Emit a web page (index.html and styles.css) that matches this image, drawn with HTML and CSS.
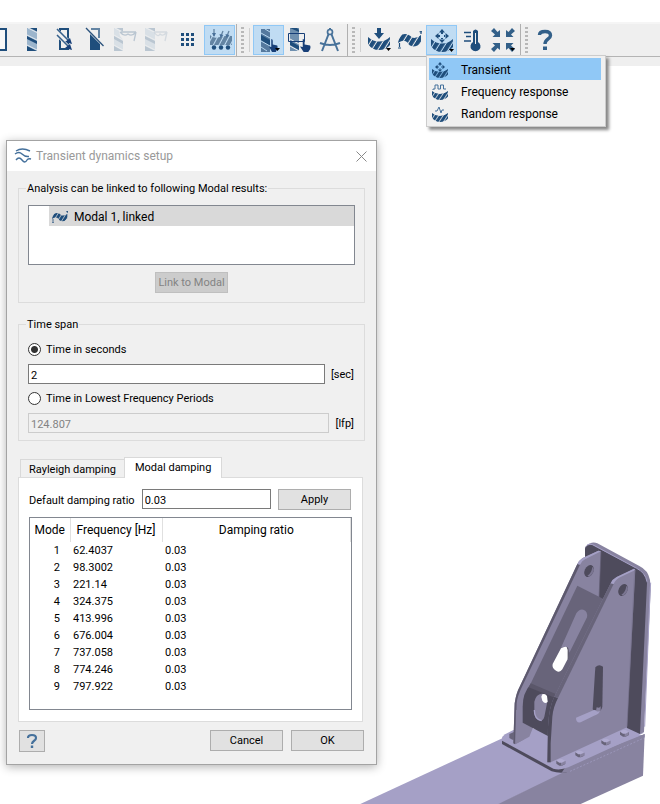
FILE: index.html
```html
<!DOCTYPE html>
<html lang="en">
<head>
<meta charset="utf-8">
<title>Transient dynamics setup</title>
<link rel="stylesheet" href="styles.css">
</head>
<body>
<svg class="defs" aria-hidden="true">
  <defs>
    <pattern id="hatch" width="5.200" height="5" patternUnits="userSpaceOnUse" patternTransform="rotate(32)">
      <rect width="4.200" height="5" fill="#1f4e7c"/>
    </pattern>
    <pattern id="hatch-soft" width="5" height="5" patternUnits="userSpaceOnUse" patternTransform="rotate(28)">
      <rect width="4" height="5" fill="#6384a3"/>
    </pattern>
    <symbol id="bowl" viewBox="0 0 22 13" preserveAspectRatio="none">
      <path d="M0 0Q5 4.500 11 4.500T22 0V8Q18 13 11 13T0 7Z" fill="url(#hatch)"/>
    </symbol>
    <symbol id="bar" viewBox="0 0 10 23" preserveAspectRatio="none">
      <path d="M0 0H10V23H0Z" fill="#9cb5cc"/>
      <path d="M3 0H10V3.500ZM0 8L10 13V16L0 11ZM0 18L10 23H0Z" fill="#1f4e7c"/>
      <path d="M1 0L10 4.500M0 7L10 12M0 17L10 22" stroke="#e4eaf0" stroke-width="1"/>
    </symbol>
    <symbol id="moves" viewBox="0 0 14 14">
      <path d="M7 0L10 3.500H4ZM7 14L10 10.500H4ZM0 7L3.500 4V10ZM14 7L10.500 4V10ZM6 3h2v2H6ZM6 9h2v2H6ZM3 6h2v2H3ZM9 6h2v2H9Z" fill="#1f4e7c"/>
    </symbol>
    <symbol id="wave" viewBox="0 0 24 18">
      <path d="M0 12Q1 3 7 3Q11 3 14 6.500Q18 8 23 4V11Q20 15.500 15 15.500Q11 15 9.500 11.500Q6 8 0 12Z" fill="url(#hatch)"/>
      <path d="M1.500 12V16M0 17h3M23 0v3M21.500 .750h3" stroke="#1f4e7c" stroke-width="1.200" fill="none"/>
    </symbol>
    <symbol id="hand" viewBox="0 0 12 14" preserveAspectRatio="none">
      <path d="M3 0Q5 0 5 2V6L11 7Q12 8 11 11L9 14H4L0 8L3 8.500Z" fill="#173f78"/>
    </symbol>
  </defs>
</svg>

<header class="toolbar">
  <div class="group group-first">
    <button class="tool" aria-label="Outline"><svg viewBox="-13 25 31 30"><path d="M-4 29H6V50H-4Z" fill="#f8f8f8" stroke="#1f4e7c" stroke-width="2"/></svg></button>
    <button class="tool" aria-label="Mesh"><svg viewBox="18 25 31 30"><use href="#bar" x="27" y="28" width="10" height="23"/></svg></button>
    <button class="tool" aria-label="Contour"><svg viewBox="49 25 31 30"><path d="M60 32V29H68V49H60V39" fill="none" stroke="#1f4e7c" stroke-width="2"/><path d="M57 30L70 42M57 35L70 48" stroke="#efefef" stroke-width="3"/><path d="M57 29L70 42M57 35L70 48" stroke="#35608c" stroke-width="1.500"/><path d="M72 44L65 42L70 38ZM72 50L65 48L70 44Z" fill="#173f78"/></svg></button>
    <button class="tool" aria-label="Section"><svg viewBox="80 25 31 30"><path d="M90 34L100 44V50H90Z" fill="#1f4e7c"/><path d="M91 29H99V38" fill="none" stroke="#6384a3" stroke-width="2"/><path d="M86 28L103.500 46" stroke="#2a527c" stroke-width="1.300"/></svg></button>
    <button class="tool faded" aria-label="Show mask" disabled><svg viewBox="111 25 31 30"><use href="#bar" x="114" y="28" width="9" height="23"/><path d="M119 31Q125 35 128 33Q131 35 136 31V41H124L120 36Z" fill="#efefef"/><path d="M120 32Q124 37 128 34Q132 37 136 32L134 41M121 32H136" stroke="#1f4e7c" stroke-width="1.300" fill="none"/></svg></button>
    <button class="tool faded" aria-label="Hide mask" disabled><svg viewBox="142 25 31 30"><use href="#bar" x="145" y="28" width="10" height="23"/><g opacity=".5"><path d="M154 32Q158 38 160 34Q163 37 167 32L165 41M155 32H167" stroke="#1f4e7c" stroke-width="1.300" fill="none"/></g></svg></button>
    <button class="tool" aria-label="Grid"><svg viewBox="173 25 31 30"><path d="M181 33h3v3h-3zM186 33h3v3h-3zM191 33h3v3h-3zM181 38h3v3h-3zM186 38h3v3h-3zM191 38h3v3h-3zM181 43h3v3h-3zM186 43h3v3h-3zM191 43h3v3h-3z" fill="#1f4e7c"/></svg></button>
    <button class="tool checked" aria-label="Loads" aria-pressed="true"><svg viewBox="204 25 31 30"><path d="M210 35Q213 39 220 37T232 36V45H210Z" fill="url(#hatch-soft)"/><path d="M214 29V36M223 31L221 36M229 31L227 36" stroke="#6384a3" stroke-width="1.300"/><path d="M212 33h4l-2 4zM219.500 34l4 1-3 3zM225.500 34l4 1-3 3z" fill="#48709a"/><circle cx="214" cy="47.500" r="2.200" fill="#1f4e7c"/><circle cx="221" cy="47.500" r="2.200" fill="#1f4e7c"/><circle cx="228" cy="47.500" r="2.200" fill="#1f4e7c"/></svg></button>
  </div>
  <div class="group">
    <span class="grip"></span><span class="rule"></span>
    <button class="tool checked" aria-label="Pick"><svg viewBox="253 25 31 30"><path d="M261 29H270V52H261Z" fill="#55799e"/><path d="M261 35L270 40V46L261 40Z" fill="#1f4e7c"/><path d="M261 33L270 38M261 41L270 46M261 47L267 51M265 29L270 32" stroke="#b9d8f0" stroke-width="1"/><use href="#hand" x="269" y="39" width="9" height="13"/><path d="M275 48h5l-2.500 3z"/></svg></button>
    <button class="tool" aria-label="Box select"><svg viewBox="284 25 31 30"><path d="M290 28H299V51H290Z" fill="#6f90af"/><path d="M290 28H297L299 30V32ZM290 41L299 46V50L290 45Z" fill="#1f4e7c"/><path d="M290 39L299 44M290 46L299 51" stroke="#efefef"/><path d="M288.500 33.500H304.500V41.500H288.500Z" fill="none" stroke="#173f78"/><use href="#hand" x="300" y="39" width="11" height="13"/></svg></button>
    <button class="tool" aria-label="Measure"><svg viewBox="315 25 31 30"><path d="M329 33L322 51M331 33L338 51M320 43Q330 47 340 43" fill="none" stroke="#48729a" stroke-width="2"/><circle cx="330" cy="32" r="2.500" fill="#efefef" stroke="#48729a" stroke-width="1.700"/><path d="M330 28v2" stroke="#48729a" stroke-width="2"/></svg></button>
  </div>
  <div class="group">
    <span class="grip"></span><span class="rule"></span>
    <button class="tool" aria-label="Static"><svg viewBox="364 25 31 30"><use href="#bowl" x="368" y="37" width="22" height="13"/><path d="M377 28H381V33H384L379 39L374 33H377Z" fill="#1f4e7c"/><path d="M386 48h5l-2.500 3z"/></svg></button>
    <button class="tool" aria-label="Modal"><svg viewBox="395 25 31 30"><use href="#wave" x="398" y="31" width="24" height="18"/></svg></button>
    <div class="menu-anchor">
      <button class="tool checked" aria-label="Dynamics" aria-expanded="true"><svg viewBox="426 25 31 30"><use href="#moves" x="435" y="29" width="14" height="14"/><use href="#bowl" x="431" y="39" width="22" height="13"/><path d="M449 49h5l-2.500 3z"/></svg></button>
      <div class="menu" role="menu">
        <button class="item current" role="menuitem"><svg viewBox="0 0 16 16"><use href="#moves" x="3" y="0" width="10" height="10"/><use href="#bowl" x="0" y="7" width="16" height="9"/></svg>Transient</button>
        <button class="item" role="menuitem"><svg viewBox="0 0 16 16"><path d="M1 6V5H3V1H6V5H8.500V1H11.500V5H14" fill="none" stroke="#44709b"/><use href="#bowl" x="0" y="7" width="16" height="9"/></svg>Frequency response</button>
        <button class="item" role="menuitem"><svg viewBox="0 0 16 16"><path d="M3 5H5L7 1L9 7L10 4H12" fill="none" stroke="#44709b"/><use href="#bowl" x="0" y="7" width="16" height="9"/></svg>Random response</button>
      </div>
    </div>
    <button class="tool" aria-label="Thermal"><svg viewBox="457 25 31 30"><path d="M464 32.500H471M466 36.500H471M464 41H471" stroke="#1f4e7c" stroke-width="1.500"/><path d="M473 31Q475.500 28 478 31V42A5 5 0 1 1 473 42Z" fill="#1f4e7c"/><path d="M475.500 33V44" stroke="#efefef" stroke-width="1"/></svg></button>
    <button class="tool" aria-label="Fit"><svg viewBox="488 25 31 30"><g fill="#336089"><path d="M500 37V30L497.500 32L494 28L491 31L495 34.500L492.500 37Z"/><path d="M506 37V30L508.500 32L512 28L515 31L511 34.500L513.500 37Z"/><path d="M500 43V50L497.500 48L494 52L491 49L495 45.500L492.500 43Z"/><path d="M506 43V50L508.500 48L512 52L515 49L511 45.500L513.500 43Z"/></g><path d="M510 48h5l-2.500 3z"/></svg></button>
  </div>
  <div class="group group-last">
    <span class="grip"></span>
    <button class="tool" aria-label="Help"><svg viewBox="530 25 31 30"><path d="M539.500 35Q539.500 31.500 545 31.500T550.500 35.500C550.500 39 545 39 545 44" fill="none" stroke="#336089" stroke-width="3.400"/><path d="M543 46.500h4v3.500h-4z" fill="#336089"/></svg></button>
  </div>
</header>

<main class="canvas">
  <svg class="model" viewBox="-390 30 900 792" role="img" aria-label="Bracket model">
    <path d="M-389 822L60 614L462 615L28 822Z" fill="#a5a0c6"/>
    <path d="M25 822L230 722L464 612L459 737L272 822Z" fill="#8883a0"/>
    <path d="M36 630V642L185 724Q205 731 230 727V712Z" fill="#4e4b5c"/>
    <path d="M215 728Q230 728 240 722L464 622V612L230 705Z" fill="#8883a0"/>
    <path d="M36 632Q34 620 45 613L70 600L411 588L462 608L235 712Q210 722 190 716Z" fill="#a5a0c6"/>
    <path d="M240 724L464 623" stroke="#a5a0c6" stroke-width="2" stroke-dasharray="6 5" fill="none"/>
    <path d="M285 80V52Q288 44 305 38Q314 36 322 40L448 108Q474 120 480 150L482 180L462 606L450 612L440 300Z" fill="#8883a0"/>
    <path d="M285 80V56Q290 44 305 44L440 115Q468 128 471 160L450 612L411 594L330 400Z" fill="#4e4b5c"/>
    <path d="M292 44Q300 41 308 44L440 115Q466 128 471 155" fill="none" stroke="#a5a0c6" stroke-width="3"/>
    <path d="M482 158L480 190L464 590" fill="none" stroke="#a5a0c6" stroke-width="3"/>
    <path d="M70 640L74 520Q78 490 90 468L262 102Q268 90 278 84L325 62L333 64L327 206L120 470L115 605L100 632L75 643Z" fill="#8883a0"/>
    <path d="M70 640L74 520Q78 490 90 468L262 102L270 104L96 470Q82 498 80 520L76 643Z" fill="#5d596e"/>
    <path d="M262 102Q268 90 278 84L325 62L333 64L285 88Q276 92 270 104Z" fill="#a5a0c6"/>
    <path d="M327 205L333 65" stroke="#625e74" stroke-width="2"/>
    <path d="M76 643L120 618L98 578L172 618V696L76 646Z" fill="#a5a0c6"/>
    <path d="M76 643L118 620L130 590L98 578V540H78Z" fill="#8883a0"/>
    <path d="M262 167L342 208L205 500L120 465Z" fill="#68647a"/>
    <path d="M120 465L205 503L178 620L98 578V530Q98 490 120 465Z" fill="#4e4b5c"/>
    <path d="M122 460L206 496L202 506L116 472Z" fill="#5b576a"/>
    <path d="M213 353L259 250Q268 236 280 239Q294 244 291 262L238 368Q238 350 225 350Z" fill="#8883a0"/>
    <path d="M213 355Q232 343 235 360V383L217 418Q209 430 198 422Q185 415 188 402Z" fill="#fff"/>
    <path d="M230 350Q238 350 236 384L233 388V360Z" fill="#4e4b5c"/>
    <path d="M133 515Q138 492 155 491Q174 490 172 515L163 560Q160 573 148 572Q132 565 133 545Z" fill="#8883a0"/>
    <path d="M133 540Q133 568 155 572" fill="none" stroke="#a5a0c6" stroke-width="4"/>
    <path d="M157 493Q165 489 171 498L173 515Q165 524 157 512L154 500Z" fill="#fff"/>
    <path d="M172 697L174 590Q177 530 193 500L362 160Q368 147 380 141L432 116L436 120L411 592L182 697Z" fill="#8883a0"/>
    <path d="M172 697L174 590Q177 530 193 500L204 504Q190 530 187 560L182 640V697Z" fill="#4e4b5c"/>
    <path d="M193 500L362 160L371 162L204 504Z" fill="#68647a"/>
    <path d="M362 160Q368 147 380 141L432 116L436 120L390 142Q377 148 371 162Z" fill="#a5a0c6"/>
    <path d="M434 120L411 590" stroke="#77728e" stroke-width="2"/>
    <ellipse cx="297" cy="123" rx="13" ry="19" transform="rotate(25 297 123)" fill="#4e4b5c"/>
    <path d="M292 137Q305 130 307 110Q320 122 298 140Z" fill="#7b7692"/>
    <ellipse cx="399" cy="180" rx="13" ry="19" transform="rotate(25 399 180)" fill="#4e4b5c"/>
    <path d="M394 194Q407 187 409 167Q422 179 400 197Z" fill="#7b7692"/>
    <path d="M316 412Q327 400 339 410L337 530Q333 548 316 545L308 538Z" fill="#4e4b5c"/>
    <path d="M258 563L312 540L330 542Q328 552 312 557L272 577Q258 580 258 563Z" fill="#a5a0c6"/>
    <path d="M320 532Q330 535 332 528V541Q325 548 318 542Z" fill="#8883a0"/>
    <g id="bolts">
      <path d="M58 612v12l9 5h5V606Z" fill="#68647a"/>
      <g fill="#68647a"><path d="M199 692v9l9 6h8l10-5v-9ZM256 667v9l9 6h8l10-5v-9ZM334 631v9l9 6h8l10-5v-9ZM390 605v9l9 6h8l10-5v-9Z"/></g>
      <g fill="#8883a0"><path d="M213 697v10l12-5v-9ZM270 672v10l12-5v-9ZM348 636v10l12-5v-9ZM404 610v10l12-5v-9Z"/></g>
      <g fill="#b0abd0"><path d="M199 692l8-5h9l10 6-11 5h-7ZM256 667l8-5h9l10 6-11 5h-7ZM334 631l8-5h9l10 6-11 5h-7ZM390 605l8-5h9l10 6-11 5h-7Z"/></g>
    </g>
  </svg>

  <section class="dialog" role="dialog" aria-labelledby="dialog-title">
    <div class="titlebar">
      <svg class="title-icon" viewBox="0 0 16 16"><path d="M1 3Q7-1 15 3M0 6Q4 3 7 6T14 8.500M1 12Q4 8 7 12T12 12Q13 10 16 11" fill="none" stroke="#44709b" stroke-width="1.400"/></svg>
      <h1 id="dialog-title">Transient dynamics setup</h1>
      <button class="close" aria-label="Close"><svg viewBox="0 0 11 11"><path d="M.5 .5L10.500 10.500M10.500 .5L.5 10.500" stroke="#888" fill="none"/></svg></button>
    </div>
    <form class="body">
      <fieldset class="linked">
        <legend>Analysis can be linked to following Modal results:</legend>
        <ul class="list">
          <li><svg viewBox="0 0 24 18"><use href="#wave" width="24" height="18"/></svg>Modal 1, linked</li>
        </ul>
        <button class="btn" type="button" disabled>Link to Modal</button>
      </fieldset>

      <fieldset class="span">
        <legend>Time span</legend>
        <label class="radio"><input type="radio" name="unit" checked>Time in seconds</label>
        <div class="field"><input id="sec" type="text" value="2" aria-label="Time in seconds"><label for="sec">[sec]</label></div>
        <label class="radio"><input type="radio" name="unit">Time in Lowest Frequency Periods</label>
        <div class="field"><input id="lfp" type="text" value="124.807" aria-label="Time in periods" disabled><label for="lfp">[lfp]</label></div>
      </fieldset>

      <div class="tabs" role="tablist">
        <button class="tab" type="button" role="tab">Rayleigh damping</button>
        <button class="tab active" type="button" role="tab" aria-selected="true">Modal damping</button>
      </div>
      <div class="panel" role="tabpanel">
        <div class="ratio">
          <label for="ratio">Default damping ratio</label>
          <input id="ratio" type="text" value="0.03">
          <button class="btn" type="button">Apply</button>
        </div>
        <div class="table-box">
          <table>
            <thead><tr><th class="mode">Mode</th><th class="freq">Frequency [Hz]</th><th>Damping ratio</th></tr></thead>
            <tbody>
              <tr><td>1</td><td>62.4037</td><td>0.03</td></tr>
              <tr><td>2</td><td>98.3002</td><td>0.03</td></tr>
              <tr><td>3</td><td>221.14</td><td>0.03</td></tr>
              <tr><td>4</td><td>324.375</td><td>0.03</td></tr>
              <tr><td>5</td><td>413.996</td><td>0.03</td></tr>
              <tr><td>6</td><td>676.004</td><td>0.03</td></tr>
              <tr><td>7</td><td>737.058</td><td>0.03</td></tr>
              <tr><td>8</td><td>774.246</td><td>0.03</td></tr>
              <tr><td>9</td><td>797.922</td><td>0.03</td></tr>
            </tbody>
          </table>
        </div>
      </div>

      <div class="actions">
        <button class="help" type="button" aria-label="Help"><svg viewBox="0 0 12 16"><path d="M2 5Q2 2 6 2T10 5C10 8 6 7.500 6 11" fill="none" stroke="#44709b" stroke-width="2.200"/><path d="M4.800 12.500h2.400v2.500H4.800z" fill="#44709b"/></svg></button>
        <button class="btn" type="button">Cancel</button>
        <button class="btn" type="button">OK</button>
      </div>
    </form>
  </section>
</main>
</body>
</html>
```
FILE: styles.css
```css
* { box-sizing: border-box; }

body {
  margin: 0;
  min-height: 100vh;
  display: flex;
  flex-direction: column;
  background: #fff;
  color: #000;
  font: 11px/18px Roboto, sans-serif;
  overflow: hidden;
}

button, input { font: inherit; color: inherit; margin: 0; }
button { padding: 0; }
svg { display: block; overflow: visible; }
.defs { position: absolute; width: 0; height: 0; }

/* Toolbar */
.toolbar {
  display: flex;
  margin-top: 22px;
  height: 44px;
  border-top: 2px solid #f5f5f5;
  background: linear-gradient(#efefef 32px, #b4b4b4 32px, #b4b4b4 33px, #efefef 33px);
}
.group {
  display: flex;
  align-items: center;
  height: 32px;
  padding: 0 1px 0 4px;
  border-right: 1px solid #b0b0b0;
}
.group-first { margin-left: -13px; padding-left: 0; }
.group-last { border: 0; }
.group-last .grip { margin-right: 2px; }
.tool {
  width: 31px;
  height: 30px;
  border: 0;
  background: none;
}
.tool svg { width: 31px; height: 30px; }
.checked { background: #c0dcf3; box-shadow: inset 0 0 0 1px #90c8f6; }
.faded { opacity: .25; }
.grip {
  width: 3px;
  height: 27px;
  margin-right: 5px;
  background: repeating-linear-gradient(#b8b8b8 0 2px, transparent 2px 4px);
}
.rule { width: 1px; height: 24px; margin-right: 3px; background: #d0d0d0; }

/* Drop-down menu */
.menu-anchor { position: relative; display: flex; }
.menu {
  position: absolute;
  z-index: 2;
  top: 30px;
  left: 0;
  width: 180px;
  padding: 2px;
  border: 1px solid #ccc;
  background: #f0f0f0;
  box-shadow: 3px 3px 3px #888;
}
.item {
  display: flex;
  align-items: center;
  gap: 13px;
  width: 172px;
  height: 22px;
  padding: 1px 0 0 3px;
  border: 0;
  background: none;
  font-size: 12px;
  white-space: nowrap;
}
.item svg { width: 16px; height: 16px; }
.item.current { background: #90c8f6; }

/* Work area */
.canvas { position: relative; flex: 1; min-height: 738px; }
.model { position: absolute; right: 0; bottom: 0; width: 300px; }

.dialog {
  position: absolute;
  top: 74px;
  left: 6px;
  width: 371px;
  border: 1px solid #a3a3a3;
  background: #f0f0f0;
  box-shadow: 0 2px 9px rgba(0, 0, 0, .3);
}
.titlebar {
  display: flex;
  align-items: center;
  height: 30px;
  padding: 0 9px 0 8px;
  background: #fff;
}
.title-icon { width: 16px; height: 16px; margin-right: 5px; }
h1 { margin: 0; font-size: 12px; font-weight: 400; color: #999; flex: 1; }
.close { border: 0; background: none; }
.close svg { width: 11px; height: 11px; }

.body { padding: 9px 11px 12px; }
fieldset {
  min-width: 0;
  margin: 0;
  padding: 9px;
  border: 1px solid #dcdcdc;
}
legend { margin-left: -2px; padding: 0 1px; height: 16px; }

.list {
  height: 60px;
  margin: 0 0 7px;
  padding: 0 0 0 20px;
  border: 1px solid #828790;
  background: #fff;
  list-style: none;
}
.list li {
  display: flex;
  align-items: center;
  gap: 6px;
  height: 20px;
  padding: 1px 0 0 3px;
  background: #d9d9d9;
  font-size: 12px;
}
.list svg { width: 16px; height: 12px; }
.btn {
  width: 73px;
  height: 21px;
  padding-top: 1px;
  border: 1px solid #adadad;
  background: #e1e1e1;
}
.btn:disabled { border-color: #bfbfbf; background: #ccc; color: #838383; }
.linked .btn { display: block; margin: 0 auto; }

.span { margin-top: 13px; padding-bottom: 7px; }
.radio { display: flex; align-items: center; gap: 5px; height: 17px; margin-bottom: 6px; }
.radio input {
  appearance: none;
  width: 13px;
  height: 13px;
  border: 1px solid #333;
  border-radius: 50%;
  background: #fff;
}
.radio input:checked { background: radial-gradient(#333 0 3px, #fff 4px); }
.field { display: flex; align-items: center; gap: 6px; }
.field label { padding: 2px 1px 0 0; }
.field + .radio { margin-top: 6px; }
input[type="text"] {
  flex: 1;
  min-width: 0;
  height: 20px;
  padding: 2px 2px 0;
  border: 1px solid #7a7a7a;
  border-radius: 0;
  background: #fff;
}
input[type="text"]:disabled { border-color: #ccc; background: #f0f0f0; color: #838383; }

/* Tabs */
.tabs { display: flex; align-items: flex-end; margin-top: 16px; padding-left: 2px; }
.tab {
  height: 18px;
  padding: 1px 8px 0;
  border: 1px solid #d9d9d9;
  border-width: 1px 0 0 1px;
  background: #f0f0f0;
}
.tab.active {
  height: 21px;
  margin-bottom: -1px;
  padding: 0 10px;
  border-right-width: 1px;
  background: #fff;
  position: relative;
}
.panel {
  margin-right: 2px;
  padding: 11px 10px;
  border: 1px solid #dcdcdc;
  background: #fff;
}
.ratio { display: flex; gap: 7px; margin: 0 1px 7px 0; }
.ratio label { flex: 0 0 102px; white-space: nowrap; line-height: 23px; height: 21px; }
.table-box { padding-bottom: 14px; border: 1px solid #828790; }
table { width: 100%; border-collapse: collapse; table-layout: fixed; }
th {
  height: 24px;
  padding: 0;
  border-right: 1px solid #e0e0e0;
  font-size: 12px;
  font-weight: 400;
}
.mode { width: 40px; }
.freq { width: 92px; }
td { height: 17px; padding: 0 3px; line-height: 17px; }
td:first-child { padding-right: 10px; text-align: right; }

.actions { display: flex; gap: 8px; margin: 8px 1px 0; }
.help {
  display: grid;
  place-items: center;
  width: 26px;
  height: 22px;
  margin-right: auto;
  border: 1px solid #adadad;
  background: #e1e1e1;
}
.help svg { width: 12px; height: 16px; }
```
